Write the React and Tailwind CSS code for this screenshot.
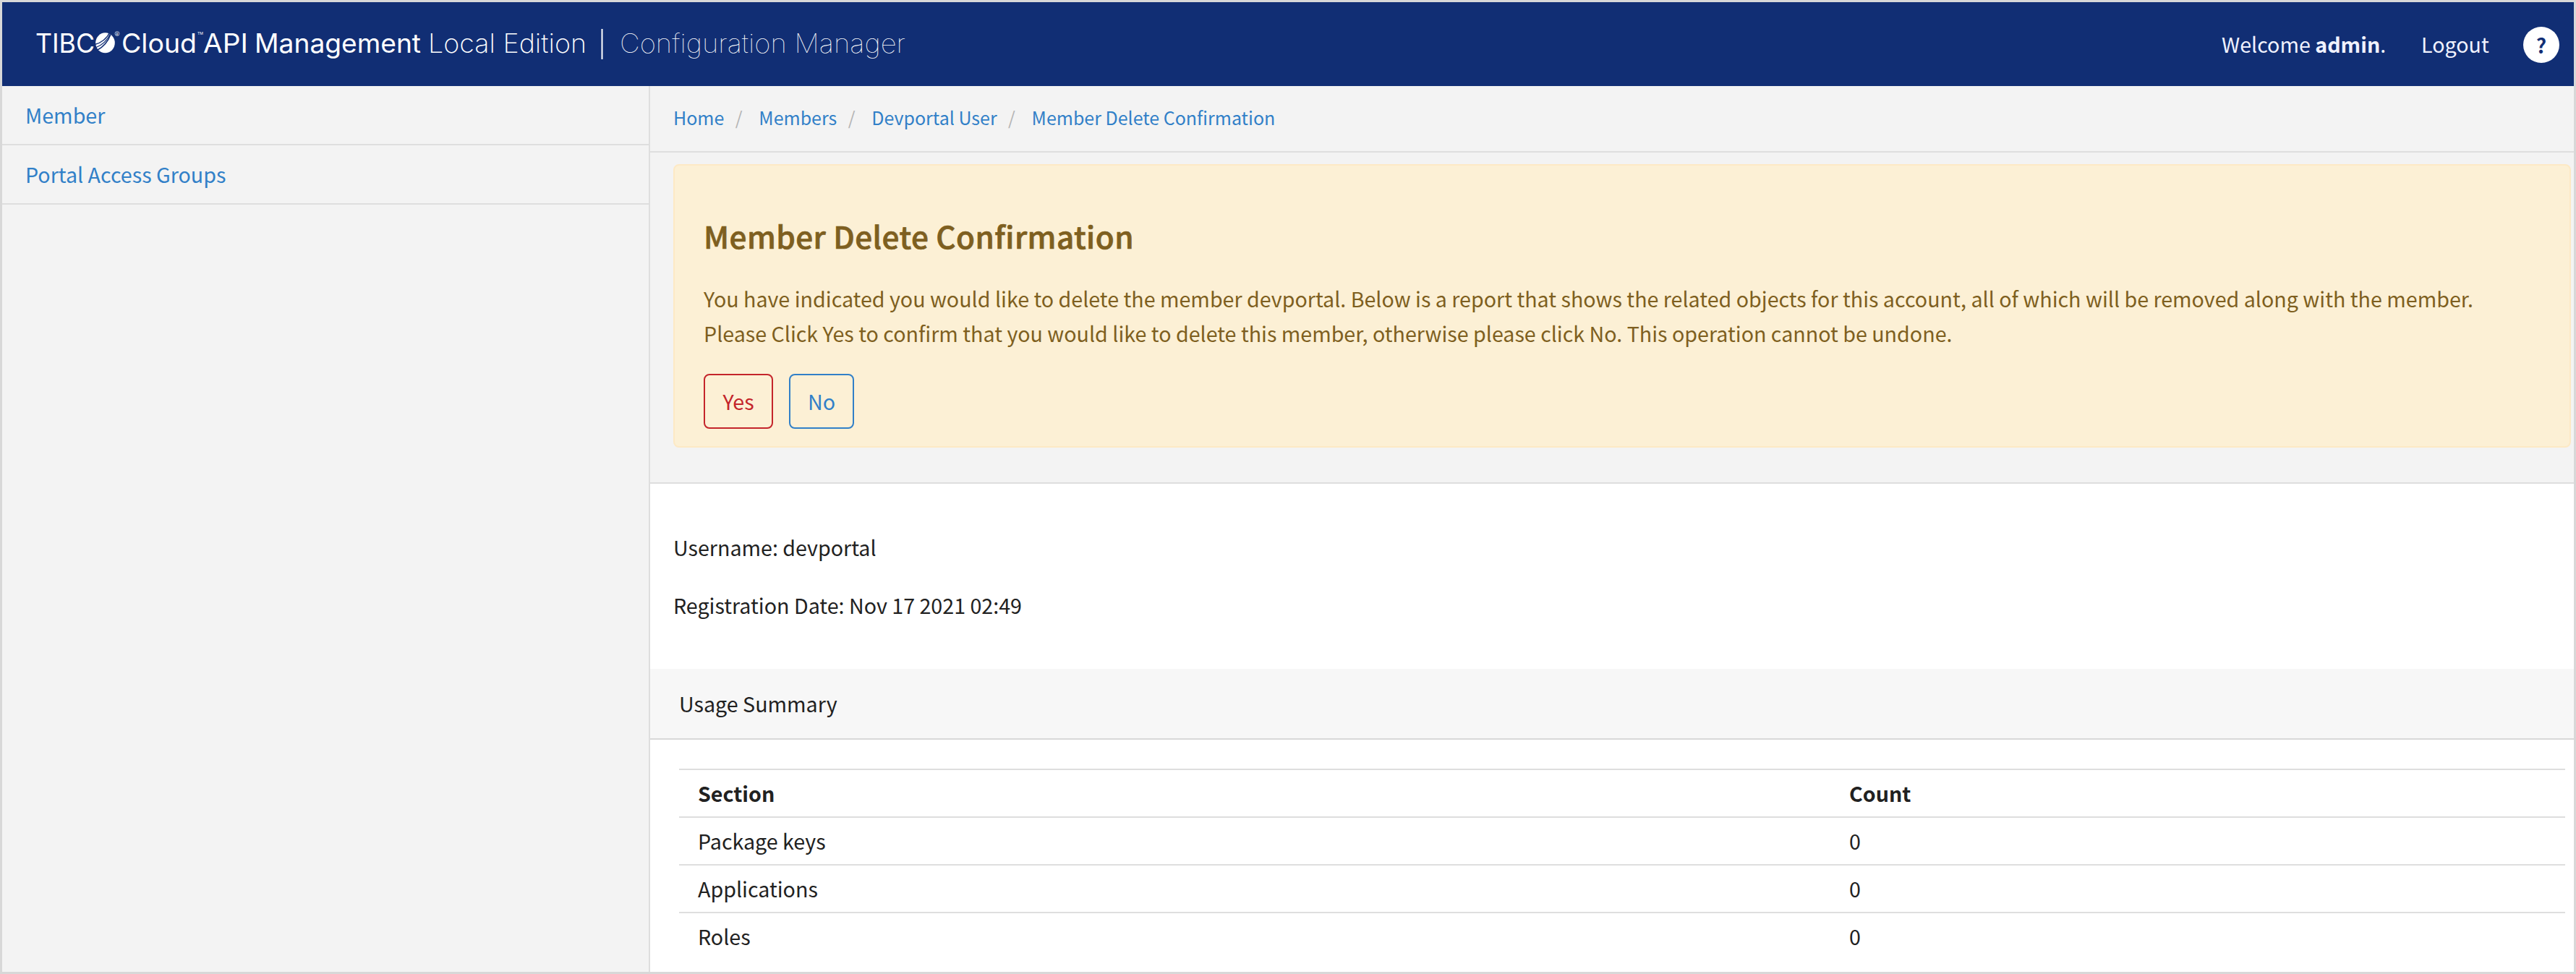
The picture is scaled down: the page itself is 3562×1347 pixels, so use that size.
const NAV = ["Member", "Portal Access Groups"];
const CRUMBS = ["Home", "Members", "Devportal User", "Member Delete Confirmation"];
const ROWS = [["Package keys", "0"], ["Applications", "0"], ["Roles", "0"]];

function Logo() {
  return (
    <svg width="1230" height="60" viewBox="40 32 1230 60" fill="#fff" fontFamily="Inter, sans-serif" fontSize="36.6">
      <g fontWeight="370">
        <text x="49" y="72.7" textLength="82" lengthAdjust="spacingAndGlyphs">TIBC</text>
        <text x="168" y="72.7" textLength="104" lengthAdjust="spacingAndGlyphs">Cloud</text>
        <text x="281" y="72.7" textLength="62" lengthAdjust="spacingAndGlyphs">API</text>
        <text x="352" y="72.7" textLength="230" lengthAdjust="spacingAndGlyphs">Management</text>
      </g>
      <ellipse cx="145.5" cy="59.3" rx="13.3" ry="14" />
      <g fill="none" stroke="#112e74">
        <path d="M131 61.500C140 59.500 148 53 151.500 45" strokeWidth="1.300" />
        <path d="M132 66C142 62 149 55 152.500 46.500" strokeWidth="1.100" />
        <path d="M133.500 70C143 65 150 56 153 47.500" strokeWidth="1.600" />
      </g>
      <circle cx="162" cy="46.500" r="3" fill="none" stroke="#fff" strokeWidth="0.600" />
      <text x="160.300" y="48.500" fontSize="5">R</text>
      <text x="273" y="48" fontSize="5" textLength="8" lengthAdjust="spacingAndGlyphs">TM</text>
      <text x="592" y="72.7" fontWeight="200" textLength="219" lengthAdjust="spacingAndGlyphs">Local Edition</text>
      <rect x="831.500" y="40" width="2" height="42" />
      <text x="857" y="72.7" fontWeight="100" textLength="395" lengthAdjust="spacingAndGlyphs">Configuration Manager</text>
    </svg>
  );
}

function Row({ a, b, head }) {
  return (
    <div className={"flex h-[66px] border-t-2 border-[#dedede] pl-[26px] leading-[64px] " + (head ? "font-bold" : "")}>
      <div className="w-[1592px]">{a}</div>
      <div>{b}</div>
    </div>
  );
}

export default function App() {
  return (
    <div className="flex h-[1347px] w-[3562px] flex-col overflow-hidden border-[3px] border-[#d8d8d8] bg-white font-['Noto_Sans_CJK_SC',sans-serif] text-[28.65px] text-[#212121]">
      <header className="flex h-[116px] shrink-0 items-start bg-[#112e74] pl-[37px] pr-5 text-[#f0f2ff]">
        <div className="mt-[29px]"><Logo /></div>
        <div className="ml-auto flex items-start pt-[34px]">
          <span className="w-[276px] whitespace-nowrap leading-[48px]">Welcome <b>admin</b>.</span>
          <span className="w-[141px] leading-[48px]">Logout</span>
          <span className="flex h-[50px] w-[50px] items-center justify-center rounded-full bg-white text-[28px] font-bold text-[#112e74]">?</span>
        </div>
      </header>
      <div className="flex min-h-0 flex-1">
        <aside className="w-[896px] shrink-0 border-r-2 border-[#dedede] bg-[#f3f3f3]">
          {NAV.map((n) => (
            <a key={n} className="block h-[82px] border-b-2 border-[#dedede] pl-8 leading-[80px] text-[#3180c8]">{n}</a>
          ))}
        </aside>
        <main className="min-w-0 flex-1">
          <section className="h-[550px] border-b-2 border-[#dedede] bg-[#f3f3f3]">
            <nav className="flex h-[92px] items-start border-b-2 border-[#dedede] pl-8 text-[25px] leading-[86px] text-[#3180c8]">
              {CRUMBS.map((c, i) => (
                <span key={c} className="flex whitespace-nowrap">
                  {i > 0 && <span className="w-12 pl-[15.5px] text-[#b5b5b5]">/</span>}
                  {c}
                </span>
              ))}
            </nav>
            <div className="ml-8 mr-1 mt-4 h-[392px] rounded-[8px] border-2 border-[#fde9c5] bg-[#fcf0d5] pl-10 text-[#7e5f20]">
              <h1 className="pt-16 text-[42.3px] font-medium leading-[66px] tracking-[0.42px] [-webkit-text-stroke:0.7px_#7e5f20]">Member Delete Confirmation</h1>
              <p className="mt-[30px] whitespace-nowrap leading-[48px]">
                You have indicated you would like to delete the member devportal. Below is a report that shows the related objects for this account, all of which will be removed along with the member.
                <br />
                Please Click Yes to confirm that you would like to delete this member, otherwise please click No. This operation cannot be undone.
              </p>
              <div className="mt-8 flex gap-[22px]">
                <button className="h-[76px] w-[96px] rounded-[8px] border-2 border-[#c4252b] text-[#c4252b]">Yes</button>
                <button className="h-[76px] w-[90px] rounded-[8px] border-2 border-[#3180c8] text-[#3180c8]">No</button>
              </div>
            </div>
          </section>
          <section className="h-[256px] pl-8 pt-[64px]">
            <p className="mb-8 leading-[48px]">Username: devportal</p>
            <p className="leading-[48px]">Registration Date: Nov 17 2021 02:49</p>
          </section>
          <div className="h-[98px] border-b-2 border-[#d8d8d8] bg-[#f7f7f7] pl-10 leading-[96px]">Usage Summary</div>
          <section className="ml-10 mr-3 mt-10">
            <Row a="Section" b="Count" head />
            {ROWS.map((r) => <Row key={r[0]} a={r[0]} b={r[1]} />)}
          </section>
        </main>
      </div>
    </div>
  );
}
